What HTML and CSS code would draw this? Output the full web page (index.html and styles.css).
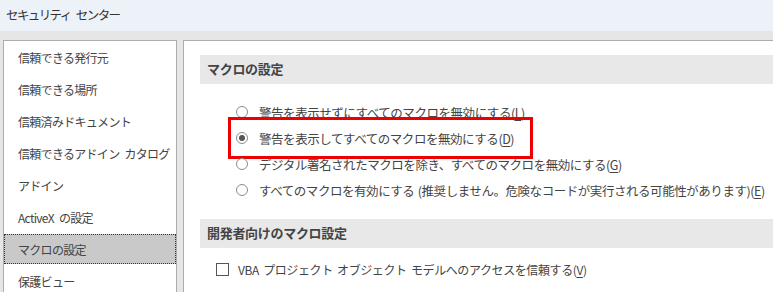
FILE: index.html
```html
<!DOCTYPE html>
<html lang="ja">
<head>
  <meta charset="UTF-8">
  <title>セキュリティ センター</title>
  <link rel="stylesheet" href="styles.css">
</head>
<body>
  <div class="window">
    <header class="titlebar">セキュリティ センター</header>

    <div class="main">
      <nav class="sidebar">
        <div class="nav-item">信頼できる発行元</div>
        <div class="nav-item">信頼できる場所</div>
        <div class="nav-item">信頼済みドキュメント</div>
        <div class="nav-item">信頼できるアドイン カタログ</div>
        <div class="nav-item">アドイン</div>
        <div class="nav-item">ActiveX の設定</div>
        <div class="nav-item selected">マクロの設定</div>
        <div class="nav-item">保護ビュー</div>
      </nav>

      <section class="content">
        <h2 class="section-title">マクロの設定</h2>
        <div class="options">
          <label class="option"><span class="radio"></span>警告を表示せずにすべてのマクロを無効にする(<u>L</u>)</label>
          <label class="option marked"><span class="radio checked"></span>警告を表示してすべてのマクロを無効にする(<u>D</u>)</label>
          <label class="option"><span class="radio"></span>デジタル署名されたマクロを除き、すべてのマクロを無効にする(<u>G</u>)</label>
          <label class="option"><span class="radio"></span>すべてのマクロを有効にする (推奨しません。危険なコードが実行される可能性があります)(<u>E</u>)</label>
        </div>

        <h2 class="section-title">開発者向けのマクロ設定</h2>
        <label class="check-row"><span class="checkbox"></span>VBA プロジェクト オブジェクト モデルへのアクセスを信頼する(<u>V</u>)</label>
      </section>
    </div>
  </div>
</body>
</html>
```

FILE: styles.css
```css
:root {
  --title-bg: #edf2f9;
  --bg: #e6e6e6;
  --panel: #ffffff;
  --border: #adadad;
  --text: #444444;
  --band: #e8e8e8;
  --selected: #c9c9c9;
  --mark: #ee0000;
}

* {
  box-sizing: border-box;
  margin: 0;
  padding: 0;
}

body {
  font-family: "Noto Sans CJK JP", "Noto Sans", sans-serif;
  background: var(--bg);
  color: var(--text);
  width: 773px;
  height: 292px;
  overflow: hidden;
}

.window {
  height: 100%;
  display: flex;
  flex-direction: column;
}

.titlebar {
  height: 31px;
  flex-shrink: 0;
  background: var(--title-bg);
  font-size: 12.5px;
  letter-spacing: -1.6px;
  word-spacing: 4px;
  color: #333;
  padding: 5px 0 0 6px;
}

.main {
  flex: 1;
  display: flex;
  gap: 6px;
  padding: 9px 0 0 3px;
  min-height: 0;
}

.sidebar {
  width: 174px;
  flex-shrink: 0;
  background: var(--panel);
  border: 1px solid var(--border);
  border-bottom: none;
  padding-top: 1px;
  display: flex;
  flex-direction: column;
  gap: 2px;
  overflow: hidden;
}

.nav-item {
  height: 30px;
  flex-shrink: 0;
  display: flex;
  align-items: center;
  padding-left: 13px;
  font-size: 12px;
  letter-spacing: -0.7px;
  word-spacing: 3px;
  border: 1px dotted transparent;
}

.nav-item.selected {
  background: var(--selected);
  border-color: #333;
}

.content {
  flex: 1;
  min-width: 0;
  background: var(--panel);
  border: 1px solid var(--border);
  border-right: none;
  border-bottom: none;
  padding: 14px 0 0 16px;
  overflow: hidden;
}

.section-title {
  height: 29px;
  background: var(--band);
  font-size: 13px;
  font-weight: 700;
  letter-spacing: -0.3px;
  color: #444;
  display: flex;
  align-items: center;
  padding: 0 0 2px 7px;
}

.options {
  padding: 15px 0 16px 0;
}

.option {
  position: relative;
  height: 26px;
  display: flex;
  align-items: center;
  padding-left: 36px;
  font-size: 12.5px;
  letter-spacing: -0.45px;
  word-spacing: 1px;
  white-space: nowrap;
}

.option.marked::after {
  content: "";
  position: absolute;
  left: 28px;
  top: -8px;
  width: 299px;
  height: 36px;
  border: 3px solid var(--mark);
}

.radio {
  width: 12px;
  height: 12px;
  border: 1px solid #8c8c8c;
  border-radius: 50%;
  margin-right: 11px;
  display: flex;
  align-items: center;
  justify-content: center;
  flex-shrink: 0;
}

.radio.checked::before {
  content: "";
  width: 6px;
  height: 6px;
  border-radius: 50%;
  background: #555;
}

.check-row {
  height: 42px;
  display: flex;
  align-items: center;
  padding-left: 16px;
  font-size: 12px;
  letter-spacing: -0.4px;
  word-spacing: 2px;
  white-space: nowrap;
}

.checkbox {
  width: 13px;
  height: 13px;
  border: 1px solid #555;
  margin-right: 9px;
  flex-shrink: 0;
}

u {
  text-decoration-thickness: 1px;
  text-underline-offset: 2px;
}
```
